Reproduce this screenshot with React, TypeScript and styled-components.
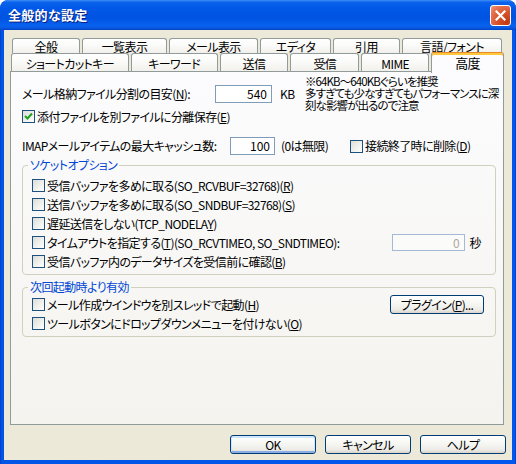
import React from 'react';
import styled, { createGlobalStyle, css } from 'styled-components';

const Global = createGlobalStyle`
  html, body { margin: 0; padding: 0; background: #ffffff; }
  body {
    font-family: "Noto Sans CJK JP", sans-serif;
    font-size: 12px;
    letter-spacing: -0.6px;
    color: #000;
    font-feature-settings: "palt";
  }
  * { box-sizing: border-box; }
`;

const Window = styled.div`
  width: 516px;
  height: 464px;
  display: flex;
  flex-direction: column;
  background: linear-gradient(90deg, #0030B8 0px, #0055E5 1px, #0058EE calc(100% - 1px), #0030B8 100%);
  border-radius: 8px 8px 0 0;
  overflow: hidden;
`;

const TitleBar = styled.div`
  height: 30px;
  flex-shrink: 0;
  display: flex;
  align-items: center;
  padding: 0 5px 0 8px;
  background: linear-gradient(180deg, #3C8EF7 0%, #0A62EC 8%, #0057E7 30%, #0053E1 60%, #0661EE 85%, #0B5BE2 92%, #0043C6 100%);
  border-radius: 8px 8px 0 0;
`;

const Title = styled.div`
  color: #ffffff;
  font-weight: bold;
  font-size: 13px;
  letter-spacing: 0.3px;
  line-height: 16px;
  text-shadow: 1px 1px 0 #0A1E80;
  flex: 1;
`;

const CloseButton = styled.div`
  width: 21px;
  height: 21px;
  border: 1px solid #ffffff;
  border-radius: 3px;
  background: radial-gradient(circle at 85% 85%, #C13A12 0%, #D9542B 45%, #E8775A 80%, #F19E85 100%);
  display: flex;
  align-items: center;
  justify-content: center;
`;

const Client = styled.div`
  flex: 1;
  margin: 0 4px 4px;
  background: #ECE9D8;
  display: flex;
  flex-direction: column;
  padding: 8px 8px 6px 6px;
`;

const TabRow = styled.div<{ $indent: number; $h: number }>`
  display: flex;
  gap: 2px;
  height: ${(p) => p.$h}px;
  margin-left: ${(p) => p.$indent}px;
`;

const Tab = styled.div<{ $w: number; $active?: boolean; $pt?: number }>`
  width: ${(p) => p.$w}px;
  height: 100%;
  border: 1px solid #919B9C;
  border-bottom: none;
  border-radius: 3px 3px 0 0;
  background: linear-gradient(180deg, #FFFFFF 0%, #FBFBFA 40%, #F1F0EB 100%);
  display: flex;
  align-items: center;
  justify-content: center;
  line-height: 12px;
  padding-top: ${(p) => p.$pt ?? 2}px;
  white-space: nowrap;
  ${(p) =>
    p.$active &&
    css`
      position: relative;
      z-index: 2;
      height: 21px;
      margin-top: -1px;
      border-top: 1px solid #E68B2C;
      box-shadow: inset 0 2px 0 #FFC73C;
      background: #FCFCFE;
      padding-top: 0;
      font-size: 13px;
    `}
`;

const Panel = styled.div`
  flex: 1;
  border: 1px solid #919B9C;
  background: linear-gradient(180deg, #FCFCFE 0%, #F4F3EE 100%);
  display: flex;
  flex-direction: column;
  padding: 3px 7px 0 11px;
`;

const TopSection = styled.div`
  display: flex;
  align-items: flex-start;
`;

const LeftCol = styled.div`
  width: 283px;
  flex-shrink: 0;
  display: flex;
  flex-direction: column;
`;

const FieldRow = styled.div<{ $mt: number }>`
  display: flex;
  align-items: center;
  height: 18px;
  margin-top: ${(p) => p.$mt}px;
  white-space: nowrap;
`;

const FieldLabel = styled.span<{ $w: number }>`
  width: ${(p) => p.$w}px;
  flex-shrink: 0;
  line-height: 12px;
`;

const TextBox = styled.div<{ $w: number; $h?: number; $disabled?: boolean }>`
  width: ${(p) => p.$w}px;
  height: ${(p) => p.$h ?? 18}px;
  flex-shrink: 0;
  border: 1px solid ${(p) => (p.$disabled ? '#A5B9D5' : '#7F9DB9')};
  background: ${(p) => (p.$disabled ? '#FBFBF9' : '#FFFFFF')};
  color: ${(p) => (p.$disabled ? '#ACA899' : '#000')};
  display: flex;
  align-items: center;
  justify-content: flex-end;
  padding-right: 4px;
  line-height: 12px;
  letter-spacing: 0;
`;

const Unit = styled.span<{ $ml: number; $w?: number; $mr?: number }>`
  margin-left: ${(p) => p.$ml}px;
  margin-right: ${(p) => p.$mr ?? 0}px;
  ${(p) => (p.$w ? `width: ${p.$w}px; flex-shrink: 0;` : '')}
  line-height: 12px;
`;

const Note = styled.div`
  font-size: 11.5px;
  line-height: 12px;
  white-space: nowrap;
  letter-spacing: -0.9px;
`;

const CheckRow = styled.label<{ $mt?: number }>`
  display: flex;
  align-items: center;
  gap: 2px;
  margin-top: ${(p) => p.$mt ?? 0}px;
  height: 13px;
  white-space: nowrap;
  line-height: 12px;
`;

const Box = styled.span`
  width: 13px;
  height: 13px;
  flex-shrink: 0;
  border: 1px solid #1C5180;
  background: linear-gradient(135deg, #DCDCD7 0%, #F0F0EC 55%, #FFFFFF 100%);
  display: inline-flex;
  align-items: center;
  justify-content: center;
`;

const U = styled.span`
  text-decoration: underline;
  text-underline-offset: 1px;
`;

const Group = styled.fieldset<{ $mt: number; $pt: number }>`
  margin: ${(p) => p.$mt}px 0 0;
  padding: ${(p) => p.$pt}px 11px 3px 9px;
  border: 1px solid #D0D0BF;
  border-radius: 4px;
  min-width: 0;
`;

const Legend = styled.legend`
  color: #0046D5;
  padding: 0 2px;
  margin-left: -4px;
  line-height: 12px;
  font-size: 12px;
`;

const GroupRow = styled.div`
  display: flex;
  align-items: center;
  height: 19px;
`;

const Spacer = styled.div`
  flex: 1;
`;

const Button = styled.div<{ $w: number; $default?: boolean }>`
  width: ${(p) => p.$w}px;
  height: 19px;
  flex-shrink: 0;
  border: 1px solid #003C74;
  border-radius: 3px;
  background: linear-gradient(180deg, #FFFFFF 0%, #F6F6F3 45%, #EDECE7 80%, #D9D4CA 100%);
  display: flex;
  align-items: center;
  justify-content: center;
  line-height: 12px;
  white-space: nowrap;
  ${(p) =>
    p.$default &&
    css`
      box-shadow: inset 0 1px 0 1px #CEE7FF, inset 0 -1px 0 1px #89ADE4;
    `}
`;

const ButtonBar = styled.div`
  display: flex;
  justify-content: flex-end;
  gap: 9px;
  margin-top: 10px;
  margin-right: -2px;
`;

const CheckMark = () => (
  <svg width="9" height="9" viewBox="0 0 9 9">
    <polyline points="1,4 3.5,6.5 8,1.5" fill="none" stroke="#21A121" strokeWidth="2" />
  </svg>
);

const CheckBox: React.FC<{ checked?: boolean; mt?: number; children: React.ReactNode }> = ({ checked, mt, children }) => (
  <CheckRow $mt={mt}>
    <Box>{checked && <CheckMark />}</Box>
    <span>{children}</span>
  </CheckRow>
);

const row1 = [
  { label: '全般', w: 68 },
  { label: '一覧表示', w: 85 },
  { label: 'メール表示', w: 89 },
  { label: 'エディタ', w: 71 },
  { label: '引用', w: 67 },
  { label: '言語/フォント', w: 100 },
];

const row2 = [
  { label: 'ショートカットキー', w: 118 },
  { label: 'キーワード', w: 87 },
  { label: '送信', w: 69 },
  { label: '受信', w: 69 },
  { label: 'MIME', w: 68 },
];

export default function App() {
  return (
    <>
      <Global />
      <Window>
        <TitleBar>
          <Title>全般的な設定</Title>
          <CloseButton>
            <svg width="11" height="11" viewBox="0 0 11 11">
              <path d="M1.5 1.5 L9.5 9.5 M9.5 1.5 L1.5 9.5" stroke="#ffffff" strokeWidth="2.2" strokeLinecap="square" />
            </svg>
          </CloseButton>
        </TitleBar>
        <Client>
          <TabRow $indent={2} $h={15}>
            {row1.map((t) => (
              <Tab key={t.label} $w={t.w} $pt={1}>
                {t.label}
              </Tab>
            ))}
          </TabRow>
          <TabRow $indent={1} $h={18}>
            {row2.map((t) => (
              <Tab key={t.label} $w={t.w}>
                {t.label}
              </Tab>
            ))}
            <Tab $w={73} $active>
              高度
            </Tab>
          </TabRow>
          <Panel>
            <TopSection>
              <LeftCol>
                <FieldRow $mt={10}>
                  <FieldLabel $w={193}>
                    メール格納ファイル分割の目安(<U>N</U>):
                  </FieldLabel>
                  <TextBox $w={57}>540</TextBox>
                  <Unit $ml={8}>KB</Unit>
                </FieldRow>
                <CheckBox checked mt={7}>
                  添付ファイルを別ファイルに分離保存(<U>E</U>)
                </CheckBox>
              </LeftCol>
              <Note>
                ※64KB～640KBぐらいを推奨
                <br />
                多すぎても少なすぎてもパフォーマンスに深
                <br />
                刻な影響が出るので注意
              </Note>
            </TopSection>
            <FieldRow $mt={14}>
              <FieldLabel $w={208}>IMAPメールアイテムの最大キャッシュ数:</FieldLabel>
              <TextBox $w={45}>100</TextBox>
              <Unit $ml={6} $w={69}>
                (0は無限)
              </Unit>
              <CheckBox>
                接続終了時に削除(<U>D</U>)
              </CheckBox>
            </FieldRow>
            <Group $mt={4} $pt={5}>
              <Legend>ソケットオプション</Legend>
              <GroupRow>
                <CheckBox>
                  受信バッファを多めに取る(SO_RCVBUF=32768)(<U>R</U>)
                </CheckBox>
              </GroupRow>
              <GroupRow>
                <CheckBox>
                  送信バッファを多めに取る(SO_SNDBUF=32768)(<U>S</U>)
                </CheckBox>
              </GroupRow>
              <GroupRow>
                <CheckBox>
                  遅延送信をしない(TCP_NODELA<U>Y</U>)
                </CheckBox>
              </GroupRow>
              <GroupRow>
                <CheckBox>
                  タイムアウトを指定する(<U>T</U>)(SO_RCVTIMEO, SO_SNDTIMEO):
                </CheckBox>
                <Spacer />
                <TextBox $w={73} $h={17} $disabled>
                  0
                </TextBox>
                <Unit $ml={5} $mr={3}>
                  秒
                </Unit>
              </GroupRow>
              <GroupRow>
                <CheckBox>
                  受信バッファ内のデータサイズを受信前に確認(<U>B</U>)
                </CheckBox>
              </GroupRow>
            </Group>
            <Group $mt={6} $pt={2}>
              <Legend>次回起動時より有効</Legend>
              <GroupRow>
                <CheckBox>
                  メール作成ウインドウを別スレッドで起動(<U>H</U>)
                </CheckBox>
                <Spacer />
                <Button $w={94}>
                  プラグイン(<U>P</U>)...
                </Button>
              </GroupRow>
              <GroupRow>
                <CheckBox>
                  ツールボタンにドロップダウンメニューを付けない(<U>O</U>)
                </CheckBox>
              </GroupRow>
            </Group>
          </Panel>
          <ButtonBar>
            <Button $w={86} $default>
              OK
            </Button>
            <Button $w={86}>キャンセル</Button>
            <Button $w={86}>ヘルプ</Button>
          </ButtonBar>
        </Client>
      </Window>
    </>
  );
}
